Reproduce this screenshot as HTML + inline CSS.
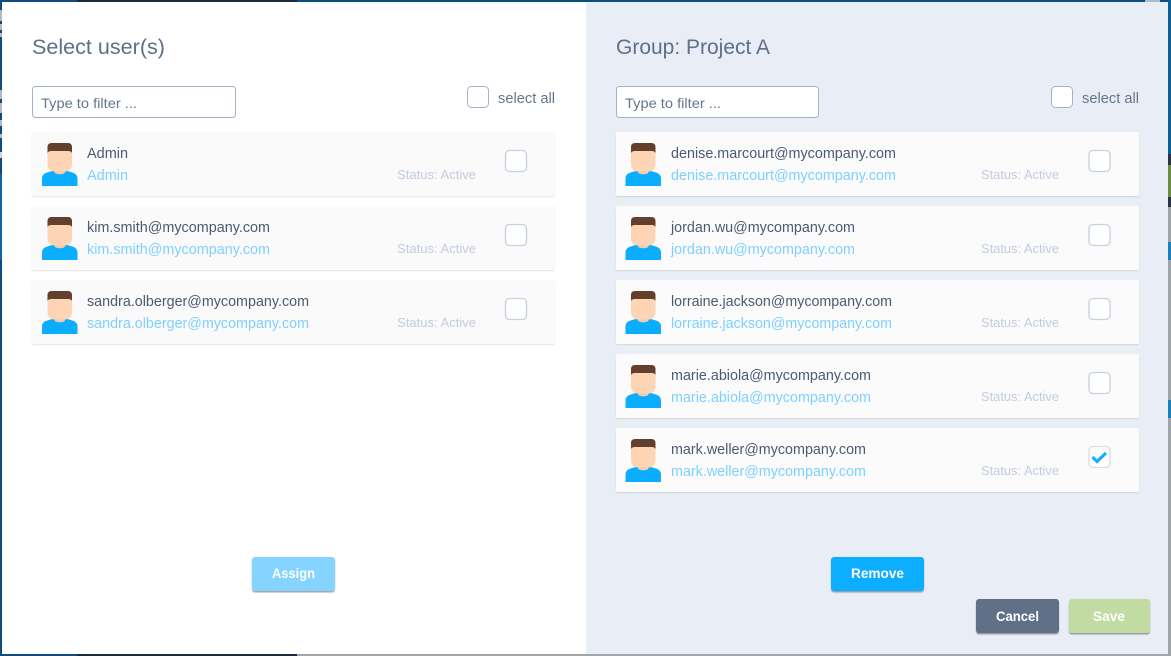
<!DOCTYPE html>
<html><head><meta charset="utf-8"><style>
html,body{margin:0;padding:0;width:1171px;height:656px;overflow:hidden;background:#fff}
svg{display:block}
text{font-family:"Liberation Sans",sans-serif}
.h{font-size:21px;fill:#5f6f87}
.f{font-size:14px;fill:#66758c}
.s{font-size:14.5px;fill:#66758c}
.n{font-size:14.5px;fill:#4c5a70}
.e{font-size:14.5px;fill:#7fd0ff}
.t{font-size:12.5px;fill:#c2ccdc}
.b{font-size:14px;font-weight:700;fill:#fff}
.c{fill:#fff;stroke:#c5d0e0;stroke-width:1.3}
.i{fill:#fff;stroke:#a3b2c9;stroke-width:1}
</style></head><body>
<svg width="1171" height="656" viewBox="0 0 1171 656" xmlns="http://www.w3.org/2000/svg">
<defs>
<filter id="sh" x="-2%" y="-5%" width="104%" height="115%"><feDropShadow dx="0" dy="1" stdDeviation="0.5" flood-color="#000" flood-opacity=".1"/></filter>
<filter id="bs" x="-10%" y="-10%" width="120%" height="130%"><feDropShadow dx="0" dy="1.500" stdDeviation="0.6" flood-color="#000" flood-opacity=".35"/></filter>
<g id="av">
<path d="M0 43V35.500C0 31.500 3 30 6 29.200C8 28.600 10 28.200 11.500 27.500H24C25.500 28.200 27.500 28.600 29.500 29.200C32.500 30 35.500 31.500 35.500 35.500V43Z" fill="#0badff"/>
<path d="M12.500 24H23V29C23 30.500 20.500 31.300 17.700 31.300C15 31.300 12.500 30.500 12.500 29Z" fill="#f3cbaa"/>
<path d="M5.500 6H30V21.500C30 25.500 27 28.500 23 28.500H12.500C8.500 28.500 5.500 25.500 5.500 21.500Z" fill="#fdd5b5"/>
<path d="M5.500 10V4C5.500 1.500 7 0 9.500 0H26C28.500 0 30 1.500 30 4V10C29.500 8.800 28.500 8.200 26.500 8H9C7 8.200 6 8.800 5.500 10Z" fill="#633f2e"/>
</g>
</defs>

<!-- backdrop -->
<rect width="1171" height="656" fill="#0f4a80"/>
<rect x="0" y="174" width="2" height="86" fill="#1266a8"/>
<rect x="0" y="10" width="2" height="11" fill="#b5b8bc"/>
<rect x="0" y="24" width="2" height="6" fill="#b5b8bc"/>
<rect x="0" y="33" width="2" height="4" fill="#b5b8bc"/>
<rect x="0" y="90" width="2" height="9" fill="#b5b8bc"/>
<rect x="0" y="103" width="2" height="10" fill="#b5b8bc"/>
<rect x="0" y="120" width="2" height="6" fill="#b5b8bc"/>
<rect x="0" y="134" width="2" height="4" fill="#b5b8bc"/>
<rect x="0" y="152" width="2" height="6" fill="#d5d5d5"/>
<rect x="77" y="0" width="220" height="2" fill="#1b2a41"/>
<rect x="297" y="0" width="874" height="2" fill="#0b4f7f"/>
<rect x="1145" y="0" width="15" height="2" fill="#a9bccb"/>
<rect x="77" y="654" width="220" height="2" fill="#1b2a41"/>
<rect x="297" y="654" width="874" height="2" fill="#a5a5a5"/>
<rect x="1168" y="0" width="3" height="656" fill="#9ea3a9"/>
<rect x="1168" y="0" width="3" height="154" fill="#0b5f93"/>
<rect x="1168" y="154" width="3" height="11" fill="#2a3344"/>
<rect x="1168" y="165" width="3" height="32" fill="#6c8b45"/>
<rect x="1168" y="197" width="3" height="10" fill="#2a3344"/>
<rect x="1168" y="242" width="3" height="18" fill="#1d7fb8"/>
<rect x="1168" y="400" width="3" height="18" fill="#1d7fb8"/>

<!-- panels -->
<rect x="2" y="2" width="584" height="652" fill="#fff"/>
<rect x="586" y="2" width="582" height="652" fill="#e9eef6"/>

<!-- left header -->
<text x="32" y="54" class="h" textLength="133" lengthAdjust="spacingAndGlyphs">Select user(s)</text>
<rect x="32.500" y="86.500" width="203" height="31" rx="3" class="i"/>
<text x="41" y="108" class="f" textLength="96" lengthAdjust="spacingAndGlyphs">Type to filter ...</text>
<rect x="467.500" y="86.500" width="21" height="21" rx="4" class="i"/>
<text x="498" y="103" class="s" textLength="57" lengthAdjust="spacingAndGlyphs">select all</text>

<!-- right header -->
<text x="616" y="54" class="h" textLength="154" lengthAdjust="spacingAndGlyphs">Group: Project A</text>
<rect x="616.500" y="86.500" width="202" height="31" rx="3" class="i"/>
<text x="625" y="108" class="f" textLength="96" lengthAdjust="spacingAndGlyphs">Type to filter ...</text>
<rect x="1051.500" y="86.500" width="21" height="21" rx="4" class="i"/>
<text x="1082" y="103" class="s" textLength="57" lengthAdjust="spacingAndGlyphs">select all</text>

<!-- left rows -->
<g>
<rect x="32" y="132" width="523" height="64" rx="2" fill="#fafafb" filter="url(#sh)"/>
<use href="#av" x="42" y="143"/>
<text x="87" y="158" class="n" textLength="41" lengthAdjust="spacingAndGlyphs">Admin</text>
<text x="87" y="180" class="e" textLength="41" lengthAdjust="spacingAndGlyphs">Admin</text>
<text x="397" y="179" class="t" textLength="79" lengthAdjust="spacingAndGlyphs">Status: Active</text>
<rect x="505.500" y="150.500" width="21" height="21" rx="4" class="c"/>
</g>
<g>
<rect x="32" y="206" width="523" height="64" rx="2" fill="#fafafb" filter="url(#sh)"/>
<use href="#av" x="42" y="217"/>
<text x="87" y="232" class="n" textLength="183" lengthAdjust="spacingAndGlyphs">kim.smith@mycompany.com</text>
<text x="87" y="254" class="e" textLength="183" lengthAdjust="spacingAndGlyphs">kim.smith@mycompany.com</text>
<text x="397" y="253" class="t" textLength="79" lengthAdjust="spacingAndGlyphs">Status: Active</text>
<rect x="505.500" y="224.500" width="21" height="21" rx="4" class="c"/>
</g>
<g>
<rect x="32" y="280" width="523" height="64" rx="2" fill="#fafafb" filter="url(#sh)"/>
<use href="#av" x="42" y="291"/>
<text x="87" y="306" class="n" textLength="222" lengthAdjust="spacingAndGlyphs">sandra.olberger@mycompany.com</text>
<text x="87" y="328" class="e" textLength="222" lengthAdjust="spacingAndGlyphs">sandra.olberger@mycompany.com</text>
<text x="397" y="327" class="t" textLength="79" lengthAdjust="spacingAndGlyphs">Status: Active</text>
<rect x="505.500" y="298.500" width="21" height="21" rx="4" class="c"/>
</g>

<!-- right rows -->
<g>
<rect x="616" y="132" width="523" height="64" rx="2" fill="#fbfbfc" filter="url(#sh)"/>
<use href="#av" x="625.500" y="143"/>
<text x="671" y="158" class="n" textLength="225" lengthAdjust="spacingAndGlyphs">denise.marcourt@mycompany.com</text>
<text x="671" y="180" class="e" textLength="225" lengthAdjust="spacingAndGlyphs">denise.marcourt@mycompany.com</text>
<text x="981" y="179" class="t" textLength="78" lengthAdjust="spacingAndGlyphs">Status: Active</text>
<rect x="1089" y="150.500" width="21" height="21" rx="4" class="c"/>
</g>
<g>
<rect x="616" y="206" width="523" height="64" rx="2" fill="#fbfbfc" filter="url(#sh)"/>
<use href="#av" x="625.500" y="217"/>
<text x="671" y="232" class="n" textLength="184" lengthAdjust="spacingAndGlyphs">jordan.wu@mycompany.com</text>
<text x="671" y="254" class="e" textLength="184" lengthAdjust="spacingAndGlyphs">jordan.wu@mycompany.com</text>
<text x="981" y="253" class="t" textLength="78" lengthAdjust="spacingAndGlyphs">Status: Active</text>
<rect x="1089" y="224.500" width="21" height="21" rx="4" class="c"/>
</g>
<g>
<rect x="616" y="280" width="523" height="64" rx="2" fill="#fbfbfc" filter="url(#sh)"/>
<use href="#av" x="625.500" y="291"/>
<text x="671" y="306" class="n" textLength="221" lengthAdjust="spacingAndGlyphs">lorraine.jackson@mycompany.com</text>
<text x="671" y="328" class="e" textLength="221" lengthAdjust="spacingAndGlyphs">lorraine.jackson@mycompany.com</text>
<text x="981" y="327" class="t" textLength="78" lengthAdjust="spacingAndGlyphs">Status: Active</text>
<rect x="1089" y="298.500" width="21" height="21" rx="4" class="c"/>
</g>
<g>
<rect x="616" y="354" width="523" height="64" rx="2" fill="#fbfbfc" filter="url(#sh)"/>
<use href="#av" x="625.500" y="365"/>
<text x="671" y="380" class="n" textLength="200" lengthAdjust="spacingAndGlyphs">marie.abiola@mycompany.com</text>
<text x="671" y="402" class="e" textLength="200" lengthAdjust="spacingAndGlyphs">marie.abiola@mycompany.com</text>
<text x="981" y="401" class="t" textLength="78" lengthAdjust="spacingAndGlyphs">Status: Active</text>
<rect x="1089" y="372.500" width="21" height="21" rx="4" class="c"/>
</g>
<g>
<rect x="616" y="428" width="523" height="64" rx="2" fill="#fbfbfc" filter="url(#sh)"/>
<use href="#av" x="625.500" y="439"/>
<text x="671" y="454" class="n" textLength="195" lengthAdjust="spacingAndGlyphs">mark.weller@mycompany.com</text>
<text x="671" y="476" class="e" textLength="195" lengthAdjust="spacingAndGlyphs">mark.weller@mycompany.com</text>
<text x="981" y="475" class="t" textLength="78" lengthAdjust="spacingAndGlyphs">Status: Active</text>
<rect x="1089" y="446.500" width="21" height="21" rx="4" fill="#fff" stroke="#d5dde9" stroke-width="1.300"/>
<path d="M1092.500 457L1097 461.500L1106 453" fill="none" stroke="#0badff" stroke-width="3"/>
</g>

<!-- buttons -->
<rect x="252" y="557" width="83" height="34" rx="3" fill="#85d4ff" filter="url(#bs)"/>
<text x="272" y="578" class="b" textLength="43" lengthAdjust="spacingAndGlyphs">Assign</text>
<rect x="831" y="557" width="93" height="34" rx="3" fill="#0badff" filter="url(#bs)"/>
<text x="851" y="578" class="b" textLength="53" lengthAdjust="spacingAndGlyphs">Remove</text>
<rect x="976" y="599" width="83" height="34" rx="3" fill="#5f6f87" filter="url(#bs)"/>
<text x="996" y="621" class="b" textLength="43" lengthAdjust="spacingAndGlyphs">Cancel</text>
<rect x="1069" y="599" width="81" height="34" rx="3" fill="#c2dba3" filter="url(#bs)"/>
<text x="1093" y="621" class="b" textLength="32" lengthAdjust="spacingAndGlyphs">Save</text>
</svg>
</body></html>
